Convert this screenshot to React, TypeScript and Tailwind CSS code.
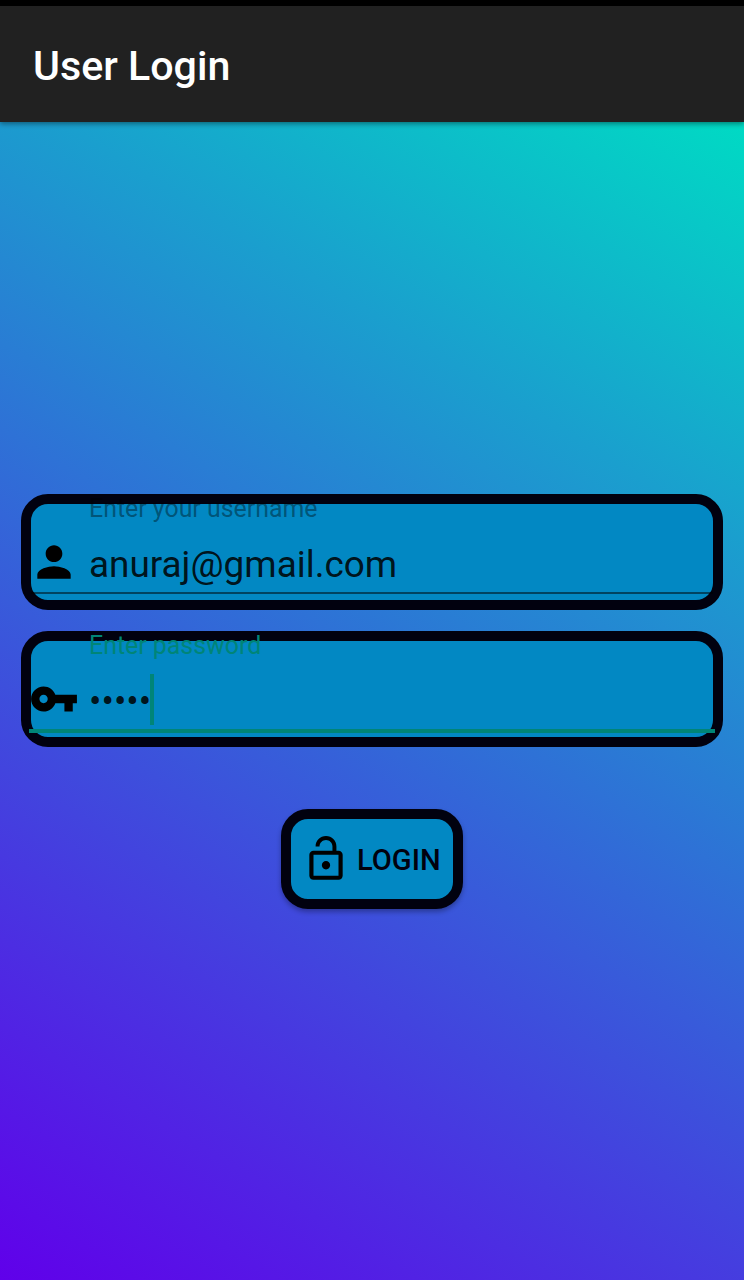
import React from "react";

function Icon({ d, className }: { d: string; className?: string }) {
  return (
    <svg viewBox="0 0 24 24" fill="currentColor" className={`size-[50px] shrink-0 ${className ?? ""}`}>
      <path d={d} />
    </svg>
  );
}

const PERSON =
  "M12 12c2.21 0 4-1.79 4-4s-1.79-4-4-4-4 1.79-4 4 1.79 4 4 4zm0 2c-2.67 0-8 1.34-8 4v2h16v-2c0-2.66-5.33-4-8-4z";
const KEY =
  "M12.65 10C11.83 7.67 9.61 6 7 6c-3.31 0-6 2.69-6 6s2.69 6 6 6c2.61 0 4.83-1.67 5.65-4H17v4h4v-4h2v-4H12.65zM7 14c-1.1 0-2-.9-2-2s.9-2 2-2 2 .9 2 2-.9 2-2 2z";
const LOCK_OPEN =
  "M12 17c1.1 0 2-.9 2-2s-.9-2-2-2-2 .9-2 2 .9 2 2 2zm6-9h-1V6c0-2.76-2.24-5-5-5S7 3.24 7 6h1.9c0-1.71 1.39-3.1 3.1-3.1 1.71 0 3.1 1.39 3.1 3.1v2H6c-1.1 0-2 .9-2 2v10c0 1.1.9 2 2 2h12c1.1 0 2-.9 2-2V10c0-1.1-.9-2-2-2zm0 12H6V10h12v10z";

export default function App() {
  return (
    <div className="flex h-[1280px] w-[744px] flex-col overflow-hidden bg-black pt-1.5 font-['Roboto',sans-serif]">
      <header className="z-10 flex h-[116px] shrink-0 items-center bg-[#212121] pt-[5px] pl-[33px] shadow-[0_2px_5px_rgba(0,0,0,0.4)]">
        <h1 className="text-[41.2px] leading-none font-medium text-white">User Login</h1>
      </header>
      <main className="flex grow flex-col items-center bg-[linear-gradient(31.5deg,#6000ea,#1a9fce_74%,#00dac4)] px-[21px] pt-[371.5px]">
        <div className="relative flex h-[116.5px] w-full rounded-[27px] border-[10px] border-[#01010f] bg-[#0288c3] pt-[33.5px]">
          <label className="absolute top-[-10px] left-[58px] text-[24.9px] leading-[30px] whitespace-nowrap text-black/40">
            Enter your username
          </label>
          <Icon d={PERSON} className="-ml-[2px]" />
          <span className="ml-[10px] text-[36.9px] leading-[56px] text-black/87">anuraj@gmail.com</span>
          <i className="absolute inset-x-0 bottom-[6.5px] h-[2px] bg-black/50" />
        </div>
        <div className="relative mt-[21px] flex h-[116px] w-full rounded-[27px] border-[10px] border-[#01010f] bg-[#0288c3] pt-[33px]">
          <label className="absolute top-[-10px] left-[58px] text-[24.9px] leading-[30px] whitespace-nowrap text-[#008577]">
            Enter password
          </label>
          <Icon d={KEY} className="-ml-[2px]" />
          <span className="ml-[10px] text-[36.9px] leading-[55px] text-black/87">•••••</span>
          <i className="-ml-px h-[51px] w-1 bg-[#008577]" />
          <i className="absolute -inset-x-[2px] bottom-[4px] h-[4px] bg-[#008577]" />
        </div>
        <button className="mt-[62px] flex h-[99.5px] w-[182px] items-center rounded-[27px] border-[10px] border-[#01010f] bg-[#0288c3] pl-[10px] text-[29.1px] font-medium text-[#01010f] shadow-[0_3px_5px_rgba(0,0,0,0.3)]">
          <Icon d={LOCK_OPEN} className="text-black" />
          <span className="ml-[6px] pt-[4px]">LOGIN</span>
        </button>
      </main>
    </div>
  );
}
